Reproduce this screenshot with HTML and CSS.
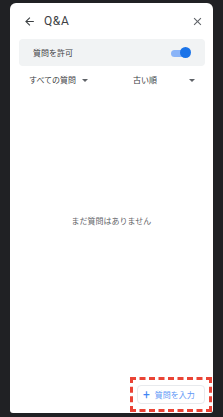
FILE: index.html
```html
<!DOCTYPE html>
<html lang="ja">
<head>
<meta charset="utf-8">
<link rel="stylesheet" href="styles.css">
</head>
<body>
<div class="panel">
  <div class="header">
    <svg class="back" width="13" height="13" viewBox="0 0 24 24"><path d="M20 11H7.83l5.59-5.59L12 4l-8 8 8 8 1.41-1.41L7.83 13H20v-2z" fill="#3c4043"/></svg>
    <span class="title">Q&amp;A</span>
    <svg class="close" width="13" height="13" viewBox="0 0 24 24"><path d="M19 6.41L17.59 5 12 10.59 6.41 5 5 6.41 10.59 12 5 17.59 6.41 19 12 13.41 17.59 19 19 17.59 13.41 12z" fill="#5f6368"/></svg>
  </div>
  <div class="allow">
    <span class="allow-label">質問を許可</span>
    <span class="toggle"><span class="track"></span><span class="thumb"></span></span>
  </div>
  <div class="filters">
    <div class="select left"><span>すべての質問</span><span class="caret"></span></div>
    <div class="select right"><span>古い順</span><span class="caret"></span></div>
  </div>
  <div class="empty">まだ質問はありません</div>
  <div class="footer">
    <div class="highlight">
      <div class="ask"><span class="plus">+</span><span>質問を入力</span></div>
    </div>
  </div>
</div>
</body>
</html>
```
FILE: styles.css
```css
html, body {
  margin: 0;
  padding: 0;
  background: #202124;
  width: 223px;
  height: 417px;
  overflow: hidden;
  font-family: "Noto Sans CJK JP", Roboto, sans-serif;
}
.panel {
  margin: 3px 0 0 10px;
  width: 203px;
  height: 410px;
  background: #fff;
  border-radius: 6px 6px 3px 3px;
  display: flex;
  flex-direction: column;
  box-sizing: border-box;
}
.header {
  height: 36px;
  display: flex;
  align-items: center;
  padding: 0 9px 0 13px;
}
.back { display: block; }
.title {
  font-family: Roboto, sans-serif;
  font-size: 12px;
  letter-spacing: 0.6px;
  color: #3c4043;
  margin-left: 8px;
  flex: 1;
  line-height: 14px;
}
.close { display: block; }
.allow {
  margin: 0 8px 0 9px;
  height: 27px;
  background: #f1f3f4;
  border-radius: 4px;
  display: flex;
  align-items: center;
  justify-content: space-between;
  padding: 0 14px;
}
.allow-label {
  font-size: 8px;
  color: #3c4043;
  line-height: 12px;
}
.toggle {
  position: relative;
  width: 20px;
  height: 10px;
  display: block;
}
.track {
  position: absolute;
  left: 0;
  top: 2px;
  width: 18px;
  height: 7px;
  border-radius: 4px;
  background: #8ab4f8;
}
.thumb {
  position: absolute;
  right: 0;
  top: -1px;
  width: 11px;
  height: 11px;
  border-radius: 50%;
  background: #1a73e8;
}
.filters {
  height: 26px;
  display: flex;
  align-items: center;
  padding: 0 18px 0 19px;
  margin-top: 1px;
}
.select {
  display: flex;
  align-items: center;
  font-size: 8px;
  color: #3c4043;
  line-height: 12px;
}
.select.left { width: 104px; gap: 6px; }
.select.right { flex: 1; justify-content: space-between; }
.caret {
  width: 0;
  height: 0;
  border-left: 3px solid transparent;
  border-right: 3px solid transparent;
  border-top: 3px solid #5f6368;
}
.empty {
  flex: 1;
  text-align: center;
  font-size: 8px;
  line-height: 12px;
  color: #5f6368;
  padding-top: 122px;
}
.footer {
  display: flex;
  justify-content: flex-end;
  padding: 0 1px 1px 0;
}
.highlight {
  border: 3px dashed #ea4335;
  padding: 5px 4px;
}
.ask {
  width: 68px;
  height: 19px;
  box-sizing: border-box;
  border: 1px solid #e8eaed;
  border-radius: 4px;
  background: #fff;
  display: flex;
  align-items: center;
  padding-left: 5px;
  gap: 5px;
  font-size: 8px;
  color: #5e97f6;
  line-height: 12px;
}
.plus {
  font-family: Roboto, sans-serif;
  font-size: 12px;
  line-height: 12px;
  color: #4285f4;
}
```
